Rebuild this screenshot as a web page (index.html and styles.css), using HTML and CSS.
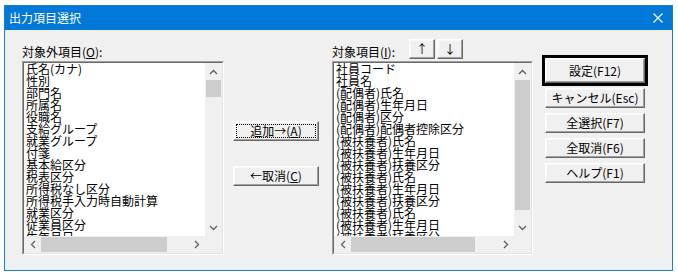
FILE: index.html
```html
<!DOCTYPE html>
<html lang="ja">
<head>
<meta charset="utf-8">
<title>出力項目選択</title>
<link rel="stylesheet" href="styles.css">
</head>
<body>
<div class="window">
  <div class="titlebar">
    <span class="title">出力項目選択</span>
    <span class="close"><svg width="10" height="10" viewBox="0 0 10 10"><path d="M0.5 0.5 L9.5 9.5 M9.5 0.5 L0.5 9.5" stroke="#fff" stroke-width="1.1" fill="none"/></svg></span>
  </div>
  <div class="body">
    <div class="main">
      <div class="col col-left">
        <div class="head"><span class="label">対象外項目(<u>O</u>):</span></div>
        <div class="listbox">
          <div class="lb-inner">
            <ul class="items">
              <li>氏名(カナ)</li>
              <li>性別</li>
              <li>部門名</li>
              <li>所属名</li>
              <li>役職名</li>
              <li>支給グループ</li>
              <li>就業グループ</li>
              <li>付箋</li>
              <li>基本給区分</li>
              <li>税表区分</li>
              <li>所得税なし区分</li>
              <li>所得税手入力時自動計算</li>
              <li>就業区分</li>
              <li>従業員区分</li>
              <li>生年月日</li>
            </ul>
            <div class="vscroll">
              <div class="arrow"><svg width="9" height="6" viewBox="0 0 9 6"><path d="M1 5 L4.5 1.5 L8 5" stroke="#606060" stroke-width="1.3" fill="none"/></svg></div>
              <div class="thumb-v thumb-v-short"></div>
              <div class="arrow arrow-end"><svg width="9" height="6" viewBox="0 0 9 6"><path d="M1 1 L4.5 4.5 L8 1" stroke="#606060" stroke-width="1.3" fill="none"/></svg></div>
            </div>
            <div class="hscroll">
              <div class="arrow"><svg width="6" height="9" viewBox="0 0 6 9"><path d="M5 1 L1.5 4.5 L5 8" stroke="#606060" stroke-width="1.3" fill="none"/></svg></div>
              <div class="thumb-h thumb-h-left"></div>
              <div class="arrow arrow-end"><svg width="6" height="9" viewBox="0 0 6 9"><path d="M1 1 L4.5 4.5 L1 8" stroke="#606060" stroke-width="1.3" fill="none"/></svg></div>
            </div>
            <div class="corner"></div>
          </div>
        </div>
      </div>

      <div class="col col-mid">
        <button class="btn btn-mid"><span class="focus-ring">追加→(<u>A</u>)</span></button>
        <button class="btn btn-mid">←取消(<u>C</u>)</button>
      </div>

      <div class="col col-right">
        <div class="head">
          <span class="label label-right">対象項目(<u>I</u>):</span>
          <button class="btn btn-arrow">↑</button>
          <button class="btn btn-arrow">↓</button>
        </div>
        <div class="listbox">
          <div class="lb-inner">
            <ul class="items">
              <li>社員コード</li>
              <li>社員名</li>
              <li>(配偶者)氏名</li>
              <li>(配偶者)生年月日</li>
              <li>(配偶者)区分</li>
              <li>(配偶者)配偶者控除区分</li>
              <li>(被扶養者)氏名</li>
              <li>(被扶養者)生年月日</li>
              <li>(被扶養者)扶養区分</li>
              <li>(被扶養者)氏名</li>
              <li>(被扶養者)生年月日</li>
              <li>(被扶養者)扶養区分</li>
              <li>(被扶養者)氏名</li>
              <li>(被扶養者)生年月日</li>
              <li>(被扶養者)扶養区分</li>
            </ul>
            <div class="vscroll">
              <div class="arrow"><svg width="9" height="6" viewBox="0 0 9 6"><path d="M1 5 L4.5 1.5 L8 5" stroke="#606060" stroke-width="1.3" fill="none"/></svg></div>
              <div class="thumb-v thumb-v-long"></div>
              <div class="arrow arrow-end"><svg width="9" height="6" viewBox="0 0 9 6"><path d="M1 1 L4.5 4.5 L8 1" stroke="#606060" stroke-width="1.3" fill="none"/></svg></div>
            </div>
            <div class="hscroll">
              <div class="arrow"><svg width="6" height="9" viewBox="0 0 6 9"><path d="M5 1 L1.5 4.5 L5 8" stroke="#606060" stroke-width="1.3" fill="none"/></svg></div>
              <div class="thumb-h thumb-h-right"></div>
              <div class="arrow arrow-end"><svg width="6" height="9" viewBox="0 0 6 9"><path d="M1 1 L4.5 4.5 L1 8" stroke="#606060" stroke-width="1.3" fill="none"/></svg></div>
            </div>
            <div class="corner"></div>
          </div>
        </div>
      </div>

      <div class="col col-btns">
        <div class="default-frame"><button class="btn btn-default">設定(F12)</button></div>
        <button class="btn btn-side">キャンセル(Esc)</button>
        <button class="btn btn-side">全選択(F7)</button>
        <button class="btn btn-side">全取消(F6)</button>
        <button class="btn btn-side">ヘルプ(F1)</button>
      </div>
    </div>
    <div class="footer"></div>
  </div>
</div>
</body>
</html>
```

FILE: styles.css
```css
* { box-sizing: border-box; }

html, body {
  margin: 0;
  background: #ffffff;
}

body {
  font-family: "Noto Sans CJK JP", "Noto Sans", sans-serif;
  font-size: 12px;
  color: #000;
}

.window {
  margin: 5px 0 0 4px;
  width: 669px;
  height: 266px;
  border: 1px solid #1a7fd4;
  background: #f0f0f0;
  display: flex;
  flex-direction: column;
}

.titlebar {
  height: 24px;
  flex: 0 0 24px;
  background: #0078d7;
  color: #fff;
  display: flex;
  align-items: center;
  padding-left: 4px;
}

.title {
  font-size: 12px;
  line-height: 12px;
}

.close {
  margin-left: auto;
  margin-right: 9px;
  width: 10px;
  height: 10px;
  display: flex;
}

.body {
  flex: 1;
  display: flex;
  flex-direction: column;
}

.main {
  height: 225px;
  display: flex;
  align-items: flex-start;
  padding: 9px 0 0 17px;
}

.footer {
  height: 15px;
  border-top: 4px solid #f6f0ec;
  background: #eef1f4;
}

.col-left { width: 202px; }
.col-mid {
  width: 86px;
  margin-left: 9px;
  margin-top: 82px;
  display: flex;
  flex-direction: column;
  gap: 25px;
}
.col-right { width: 201px; margin-left: 13px; }
.col-btns {
  width: 106px;
  margin-left: 9px;
  margin-top: 16px;
  display: flex;
  flex-direction: column;
}

.head {
  height: 22px;
  display: flex;
  align-items: flex-start;
}

.label {
  margin-top: 7px;
  line-height: 12px;
  white-space: nowrap;
}

.label-right {
  width: 77px;
  flex: 0 0 77px;
}

.btn {
  font-family: inherit;
  font-size: 12px;
  line-height: 12px;
  color: #000;
  background: #f0f0f0;
  border: 1px solid;
  border-color: #ffffff #696969 #696969 #ffffff;
  box-shadow: inset -1px -1px #a0a0a0, inset 1px 1px #f8f8f8;
  padding: 0;
  margin: 0;
  display: flex;
  align-items: center;
  justify-content: center;
  white-space: nowrap;
}

.btn-arrow {
  width: 26px;
  height: 20px;
  margin-right: 2px;
}

.btn-mid {
  width: 86px;
  height: 20px;
}

.focus-ring {
  display: flex;
  align-items: center;
  justify-content: center;
  width: 80px;
  height: 14px;
  border: 1px dotted #000;
}

.default-frame {
  width: 106px;
  height: 31px;
  border: 3px solid #000;
  margin-bottom: 2px;
}

.btn-default {
  width: 100px;
  height: 25px;
}

.btn-side {
  width: 100px;
  height: 20px;
  margin-left: 3px;
  margin-bottom: 5px;
}

.listbox {
  height: 194px;
  border: 1px solid;
  border-color: #a0a0a0 #ffffff #ffffff #a0a0a0;
}

.lb-inner {
  height: 100%;
  border: 1px solid;
  border-color: #696969 #e3e3e3 #e3e3e3 #696969;
  background: #fff;
  display: grid;
  grid-template-columns: 1fr 17px;
  grid-template-rows: 1fr 17px;
}

.items {
  list-style: none;
  margin: 0;
  padding: 0 0 0 2px;
  overflow: hidden;
  line-height: 12px;
  white-space: nowrap;
  min-height: 0;
}

.items li {
  height: 12px;
}

.vscroll {
  background: #f0f0f0;
  display: flex;
  flex-direction: column;
  min-height: 0;
}

.hscroll {
  background: #f0f0f0;
  display: flex;
}

.corner { background: #f0f0f0; }

.arrow {
  width: 17px;
  height: 17px;
  flex: 0 0 17px;
  display: flex;
  align-items: center;
  justify-content: center;
}

.vscroll .arrow-end { margin-top: auto; }
.hscroll .arrow-end { margin-left: auto; }

.thumb-v {
  margin: 0 1px;
  background: #cdcdcd;
}
.thumb-v-short { height: 17px; }
.thumb-v-long { height: 130px; }

.thumb-h {
  margin: 1px 0;
  background: #cdcdcd;
}
.thumb-h-left { width: 126px; }
.thumb-h-right { width: 124px; }
```
